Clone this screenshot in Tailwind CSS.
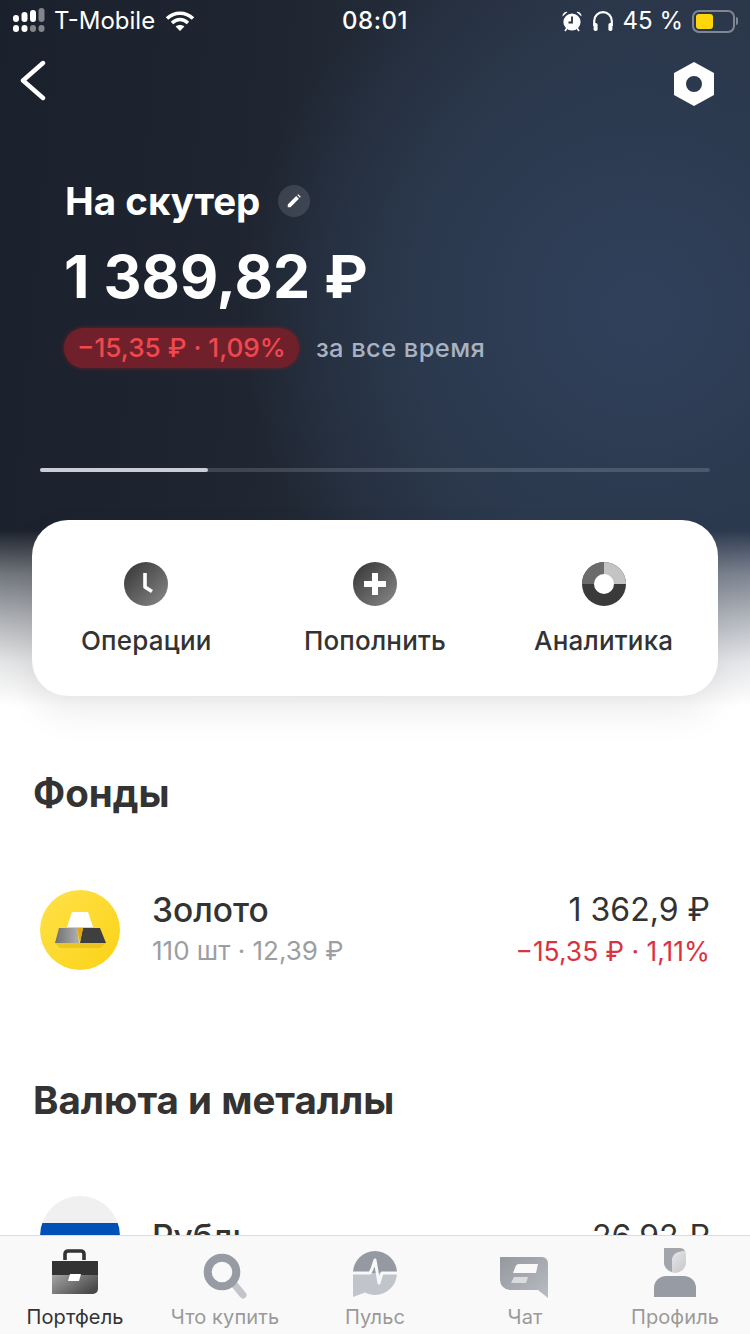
<!DOCTYPE html>
<html><head><meta charset="utf-8"><script src="https://cdn.jsdelivr.net/npm/@tailwindcss/browser@4"></script></head>
<body class="m-0">
<div class="relative w-[750px] h-[1334px] overflow-hidden bg-white font-['Inter','Liberation_Sans',sans-serif] text-[#333]">
  <!-- hero background -->
  <div class="absolute inset-x-0 top-0 h-[706px] bg-[radial-gradient(ellipse_400px_400px_at_640px_310px,#31405b_0%,#2c3a50_50%,rgba(44,55,75,0)_100%),linear-gradient(95deg,#1b212c_0%,#1f2631_35%,#2a3445_75%,#2a3446_100%)]"></div>
  <div class="absolute inset-x-0 top-[530px] h-[176px] bg-[linear-gradient(to_bottom,rgba(255,255,255,0)_0%,rgba(255,255,255,0.38)_25%,rgba(255,255,255,0.64)_50%,rgba(255,255,255,0.88)_75%,#fff_100%)]"></div>

  <div class="relative flex flex-col h-full">
    <!-- status bar -->
    <div class="h-[42px] px-[12px] flex items-center text-white relative text-[24px] shrink-0">
      <svg width="34" height="26" viewBox="0 0 34 26" class="mr-[8px]" fill="#fff">
        <rect x="1" y="7" width="6" height="7" rx="3"/><rect x="1" y="17" width="6" height="7" rx="3"/>
        <rect x="9.5" y="4" width="6" height="10" rx="3"/><rect x="9.5" y="17" width="6" height="7" rx="3"/>
        <rect x="18" y="2" width="6" height="12" rx="3"/><rect x="18" y="17" width="6" height="7" rx="3" fill-opacity=".45"/>
        <rect x="26.5" y="0" width="6" height="14" rx="3" fill-opacity=".45"/><rect x="26.5" y="17" width="6" height="7" rx="3" fill-opacity=".45"/>
      </svg>
      <span class="font-normal leading-none">T-Mobile</span>
      <svg width="30" height="22" viewBox="0 0 30 22" class="ml-[10px]" fill="none" stroke="#fff" stroke-width="3.6">
        <path d="M2 8.5C9.5 1.5 20.5 1.5 28 8.5"/><path d="M7 13c5-4.5 11-4.5 16 0"/><path d="M15 21l-4.4-4.6c2.6-2 6.2-2 8.8 0z" fill="#fff" stroke="none"/>
      </svg>
      <span class="absolute left-0 right-0 text-center font-medium tracking-[0.5px]">08:01</span>
      <div class="ml-auto flex items-center relative">
        <svg width="22" height="22" viewBox="0 0 22 22" class="mr-[9px]" fill="#fff">
          <circle cx="11" cy="12" r="8.6"/><path d="M1.5 6.5A4 4 0 0 1 6.5 2zM20.5 6.5A4 4 0 0 0 15.5 2z"/>
          <path d="M4 21l2-3M18 21l-2-3" stroke="#fff" stroke-width="1.6"/><path d="M11 6.5V12.5H7.5" fill="none" stroke="#27303e" stroke-width="1.8"/>
        </svg>
        <svg width="22" height="22" viewBox="0 0 22 22" class="mr-[9px]" fill="none" stroke="#fff" stroke-width="2.2">
          <path d="M2.2 16V11a8.8 8.8 0 0 1 17.6 0v5"/><rect x="1.6" y="13" width="4" height="8" rx="1.8" fill="#fff" stroke="none"/><rect x="16.4" y="13" width="4" height="8" rx="1.8" fill="#fff" stroke="none"/>
        </svg>
        <span class="leading-none mr-[9px]">45 %</span>
        <div class="w-[43px] h-[23px] rounded-[7px] border-[2px] border-white/40 p-[2px] mr-[1px]">
          <div class="w-[17px] h-full bg-[#ffd60a] rounded-[3px]"></div>
        </div>
        <div class="w-[2px] h-[8px] bg-white/40 rounded-r"></div>
      </div>
    </div>

    <!-- nav -->
    <div class="h-[78px] flex items-start justify-between pl-[20px] pr-[36px] pt-[18px] shrink-0">
      <svg width="26" height="42" viewBox="0 0 26 42" fill="none" stroke="#fff" stroke-width="4.4" stroke-linecap="round" stroke-linejoin="round"><path d="M23 3 3 20.5 23 38"/></svg>
      <svg width="40" height="44" viewBox="0 0 40 44" class="mt-[2px]"><path fill="#fff" fill-rule="evenodd" d="M20 0 40 11V33L20 44 0 33V11ZM20 14a8 8 0 1 0 0 16 8 8 0 0 0 0-16Z"/></svg>
    </div>

    <!-- title -->
    <div class="pl-[65px] h-[60px] flex items-center shrink-0 mt-[51px]">
      <span class="text-[38.5px] font-bold text-white leading-none">На скутер</span>
      <div class="ml-[18px] w-[32px] h-[32px] rounded-full bg-white/12 flex items-center justify-center">
        <svg width="16" height="16" viewBox="0 0 18 18" fill="#fff"><path d="M2 13 11.5 3.5l3 3L5 16H2zM12.7 2.3l1-1 3 3-1 1z"/></svg>
      </div>
    </div>
    <div class="pl-[64px] mt-[6px] h-[78px] flex items-center text-white text-[59px] font-bold leading-none shrink-0">1 389,82 ₽</div>
    <div class="pl-[64px] flex items-center shrink-0 mt-[13px]">
      <span class="h-[40px] px-[13px] rounded-full bg-[#70202a] shadow-[0_0_4px_#70202a] text-[#f0484e] text-[26.2px] font-medium flex items-center leading-none">−15,35 ₽ · 1,09%</span>
      <span class="ml-[17px] text-[25.5px] font-medium text-[#a9b2c0] tracking-[0.4px]">за все время</span>
    </div>

    <!-- progress -->
    <div class="mx-[40px] mt-[100px] h-[4px] rounded-full bg-white/15 shrink-0"><div class="w-[168px] h-full bg-[#c9ced6] rounded-full"></div></div>

    <!-- card -->
    <div class="mx-[32px] mt-[48px] h-[176px] rounded-[36px] bg-white shadow-[0_16px_36px_rgba(0,0,0,0.08)] grid grid-cols-3 pt-[42px] shrink-0 relative">
      <div class="flex flex-col items-center">
        <svg width="44" height="44" viewBox="0 0 44 44"><defs><linearGradient id="g1" x1="0" y1="0" x2="1" y2="1"><stop offset="0" stop-color="#333"/><stop offset="1" stop-color="#8a8a8a"/></linearGradient></defs><circle cx="22" cy="22" r="22" fill="url(#g1)"/><path d="M21 11v14l7 4.5" fill="none" stroke="#fff" stroke-width="3.6" stroke-linejoin="round"/></svg>
        <span class="mt-[20px] text-[26px] font-medium leading-[30px] tracking-[0.2px]">Операции</span>
      </div>
      <div class="flex flex-col items-center">
        <svg width="44" height="44" viewBox="0 0 44 44"><circle cx="22" cy="22" r="22" fill="url(#g1)"/><path d="M22 11v22M11 22h22" fill="none" stroke="#fff" stroke-width="6"/></svg>
        <span class="mt-[20px] text-[26px] font-medium leading-[30px] tracking-[0.2px]">Пополнить</span>
      </div>
      <div class="flex flex-col items-center">
        <svg width="44" height="44" viewBox="0 0 44 44"><circle cx="22" cy="22" r="22" fill="#3a3a3a"/><path d="M22 0A22 22 0 0 1 44 22H22Z" fill="#c4c4c4"/><path d="M22 0A22 22 0 0 0 0 22H22Z" fill="#6b6b6b"/><circle cx="22" cy="22" r="10" fill="#fff"/></svg>
        <span class="mt-[20px] text-[26px] font-medium leading-[30px] tracking-[0.2px]">Аналитика</span>
      </div>
    </div>

    <!-- funds -->
    <h2 class="ml-[33px] mt-[73px] text-[38.5px] font-bold leading-[48px] shrink-0">Фонды</h2>
    <div class="mt-[73px] ml-[40px] mr-[40px] flex items-center h-[80px] shrink-0">
      <svg width="80" height="80" viewBox="0 0 80 80" class="shrink-0">
        <defs>
          <linearGradient id="gy" x1="0" y1="0" x2="1" y2="1"><stop offset="0" stop-color="#ffe24a"/><stop offset="1" stop-color="#fbd216"/></linearGradient>
          <linearGradient id="gl" x1="0" y1="0" x2="1" y2="0"><stop offset="0" stop-color="#6f6f6f"/><stop offset="1" stop-color="#b0b0b0"/></linearGradient>
        </defs>
        <circle cx="40" cy="40" r="40" fill="url(#gy)"/>
        <path d="M15 53H66L60 58H20Z" fill="#d8ae10" fill-opacity=".45"/>
        <path d="M32 22H48L53 37H27Z" fill="#fff"/>
        <path d="M19 38H37L39 53H15Z" fill="url(#gl)"/>
        <path d="M43 38H60L66 53H40Z" fill="#3f3f3f"/>
        <path d="M37 38H43L40 52Z" fill="#e0a715"/>
      </svg>
      <div class="ml-[32px] flex flex-col">
        <span class="text-[33.5px] font-medium leading-[40px]">Золото</span>
        <span class="text-[26px] text-[#9b9ea3] leading-[40px] mt-[1px]">110 шт · 12,39 ₽</span>
      </div>
      <div class="ml-auto flex flex-col items-end">
        <span class="text-[32px] leading-[40px]">1 362,9 ₽</span>
        <span class="text-[26.4px] text-[#d9333f] leading-[40px] mt-[1px]">−15,35 ₽ · 1,11%</span>
      </div>
    </div>

    <h2 class="ml-[33px] mt-[106px] text-[38.5px] font-bold leading-[48px] shrink-0">Валюта и металлы</h2>
    <div class="mt-[72px] ml-[40px] mr-[40px] flex items-start shrink-0">
      <div class="w-[80px] h-[80px] rounded-full overflow-hidden flex flex-col shrink-0">
        <div class="h-[27px] bg-[#f0f0f0]"></div><div class="h-[27px] bg-[#0050b5]"></div><div class="h-[26px] bg-[#d8232a]"></div>
      </div>
      <span class="ml-[32px] mt-[21px] text-[33.5px] font-medium leading-[40px]">Рубль</span>
      <span class="ml-auto mt-[21px] text-[32px] leading-[40px]">26,92 ₽</span>
    </div>
  </div>

  <!-- tab bar -->
  <div class="absolute inset-x-0 bottom-0 h-[99px] bg-[#f9f9f9] border-t border-[#dcdcdc] grid grid-cols-5 text-[#9a9a9a] text-[20px]">
    <div class="flex flex-col items-center pt-[13px]">
      <svg width="48" height="46" viewBox="0 0 48 46"><defs><linearGradient id="gb" x1="0" y1="0" x2="1" y2="0.6"><stop offset="0" stop-color="#a5a5a5"/><stop offset="1" stop-color="#4a4a4a"/></linearGradient></defs>
        <path d="M14 11V5a3 3 0 0 1 3-3h13a3 3 0 0 1 3 3v6" fill="none" stroke="#333" stroke-width="3.6"/>
        <path d="M1 12H47V26H1Z" fill="#333"/><path d="M1 26H47V40a5 5 0 0 1-5 5H1Z" fill="url(#gb)"/><path d="M19 25h11l-2 7H17Z" fill="#fff"/></svg>
      <span class="text-[#333] leading-[24px] mt-[10px] tracking-[0.1px]">Портфель</span>
    </div>
    <div class="flex flex-col items-center pt-[13px]">
      <svg width="48" height="46" viewBox="0 0 48 46" fill="none" class="overflow-visible"><path d="M33 35 42 46" stroke="#c2c5ca" stroke-width="7" stroke-linecap="round"/><circle cx="21" cy="23" r="14.3" stroke="#979ba3" stroke-width="8"/></svg>
      <span class="leading-[24px] mt-[10px] tracking-[0.1px]">Что купить</span>
    </div>
    <div class="flex flex-col items-center pt-[13px]">
      <svg width="48" height="46" viewBox="0 0 48 46" class="overflow-visible">
        <path d="M2 24A22 22 0 0 1 46 24Z" fill="#9599a2"/>
        <path d="M2 24H46A22 22 0 0 1 24 46C20 46 17 45 14 43.5L2 48Z" fill="#c1c4ca"/>
        <path d="M2 24H19L21 20 24 11 28 34 31 24H46" fill="none" stroke="#f9f9f9" stroke-width="3" stroke-linejoin="round"/>
      </svg>
      <span class="leading-[24px] mt-[10px] tracking-[0.1px]">Пульс</span>
    </div>
    <div class="flex flex-col items-center pt-[13px]">
      <svg width="50" height="46" viewBox="0 0 50 46" class="overflow-visible"><defs><linearGradient id="gc" x1="0" y1="0" x2="1" y2="1"><stop offset="0" stop-color="#94989f"/><stop offset="1" stop-color="#b9bcc2"/></linearGradient></defs>
        <path d="M0 8H42a6 6 0 0 1 6 6V49L38 41H10a10 10 0 0 1-10-10Z" fill="url(#gc)"/>
        <path d="M19 15H38L36 24H13L15 19Q16 15 19 15Z" fill="#f9f9f9"/><path d="M14 28H28L26 34H11Z" fill="#d9dbde"/></svg>
      <span class="leading-[24px] mt-[10px] tracking-[0.1px]">Чат</span>
    </div>
    <div class="flex flex-col items-center pt-[13px]">
      <svg width="44" height="52" viewBox="0 0 44 52" class="mt-[-3px] mb-[7px]"><defs><linearGradient id="gp" x1="0" y1="0" x2="1" y2="1"><stop offset="0" stop-color="#f0f0f2"/><stop offset="1" stop-color="#c4c6ca"/></linearGradient></defs>
        <path d="M11 2H27a6 6 0 0 1 6 6V16a11 11 0 0 1-22 0Z" fill="url(#gp)"/><path d="M11 2H27a6 6 0 0 1 5 3C26 5 20 7 19 13L19 26C14 24 11 21 11 16Z" fill="#a2a5ab"/>
        <path d="M1 51V42A12 12 0 0 1 13 30H31A12 12 0 0 1 43 42V51Z" fill="#979ba3"/></svg>
      <span class="leading-[24px] tracking-[0.1px]">Профиль</span>
    </div>
  </div>
</div>
</body></html>
